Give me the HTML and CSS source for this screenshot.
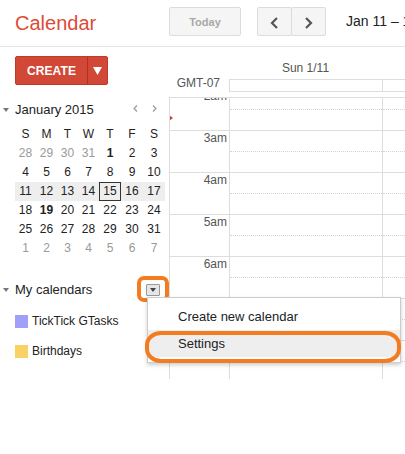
FILE: index.html
```html
<!DOCTYPE html>
<html>
<head>
<meta charset="utf-8">
<title>Calendar</title>
<link rel="stylesheet" href="styles.css">
</head>
<body>
<header class="topbar">
  <div class="logo">Calendar</div>
  <div class="btn today">Today</div>
  <div class="navgroup">
    <div class="btn nav"><svg width="9" height="12" viewBox="0 0 9 12"><polyline points="7,1 2,6 7,11" fill="none" stroke="#555" stroke-width="2.2"/></svg></div>
    <div class="btn nav next"><svg width="9" height="12" viewBox="0 0 9 12"><polyline points="2,1 7,6 2,11" fill="none" stroke="#555" stroke-width="2.2"/></svg></div>
  </div>
  <div class="range">Jan 11 – 17, 2015</div>
</header>

<div class="main">
  <aside class="sidebar">
    <div class="create">
      <span class="create-main">CREATE</span>
      <span class="create-drop"><svg width="9" height="8" viewBox="0 0 9 8"><polygon points="0,0 9,0 4.5,8" fill="#fff"/></svg></span>
    </div>

    <div class="minical">
      <div class="mc-head">
        <span class="caret"></span>
        <span class="mc-title">January 2015</span>
        <span class="mc-arrows">
          <svg width="5" height="7" viewBox="0 0 5 7"><polyline points="4,0.5 1,3.5 4,6.5" fill="none" stroke="#999" stroke-width="1.2"/></svg>
          <svg width="5" height="7" viewBox="0 0 5 7"><polyline points="1,0.5 4,3.5 1,6.5" fill="none" stroke="#999" stroke-width="1.2"/></svg>
        </span>
      </div>
      <div class="mc-grid">
        <span class="wd">S</span><span class="wd">M</span><span class="wd">T</span><span class="wd">W</span><span class="wd">T</span><span class="wd">F</span><span class="wd">S</span>
        <span class="d off">28</span><span class="d off">29</span><span class="d off">30</span><span class="d off">31</span><span class="d bold">1</span><span class="d">2</span><span class="d">3</span>
        <span class="d">4</span><span class="d">5</span><span class="d">6</span><span class="d">7</span><span class="d">8</span><span class="d">9</span><span class="d">10</span>
        <span class="d sel">11</span><span class="d sel">12</span><span class="d sel">13</span><span class="d sel">14</span><span class="d sel today-box">15</span><span class="d sel">16</span><span class="d sel">17</span>
        <span class="d">18</span><span class="d bold">19</span><span class="d">20</span><span class="d">21</span><span class="d">22</span><span class="d">23</span><span class="d">24</span>
        <span class="d">25</span><span class="d">26</span><span class="d">27</span><span class="d">28</span><span class="d">29</span><span class="d">30</span><span class="d">31</span>
        <span class="d off">1</span><span class="d off">2</span><span class="d off">3</span><span class="d off">4</span><span class="d off">5</span><span class="d off">6</span><span class="d off">7</span>
      </div>
    </div>

    <div class="mycal-head">
      <span class="caret"></span>
      <span class="mycal-title">My calendars</span>
      <span class="mycal-btn"><span class="mini-tri"></span></span>
    </div>
    <ul class="callist">
      <li class="calitem"><span class="swatch sw-tick"></span>TickTick GTasks</li>
      <li class="calitem"><span class="swatch sw-bday"></span>Birthdays</li>
    </ul>
  </aside>

  <section class="content">
    <div class="dayhead">
      <div class="tzspace"></div>
      <div class="dayname">Sun 1/11</div>
    </div>
    <div class="allday">
      <div class="tz">GMT-07</div>
      <div class="allday-box">
        <div class="ad-cell"></div>
        <div class="ad-rest"></div>
      </div>
    </div>
    <div class="grid">
      <div class="grid-inner">
        <div class="hour"><div class="hlabel">2am</div><div class="cell"><div class="half"></div></div><div class="cell rest"><div class="half"></div></div></div>
        <div class="hour"><div class="hlabel">3am</div><div class="cell"><div class="half"></div></div><div class="cell rest"><div class="half"></div></div></div>
        <div class="hour"><div class="hlabel">4am</div><div class="cell"><div class="half"></div></div><div class="cell rest"><div class="half"></div></div></div>
        <div class="hour"><div class="hlabel">5am</div><div class="cell"><div class="half"></div></div><div class="cell rest"><div class="half"></div></div></div>
        <div class="hour"><div class="hlabel">6am</div><div class="cell"><div class="half"></div></div><div class="cell rest"><div class="half"></div></div></div>
        <div class="hour"><div class="hlabel">7am</div><div class="cell"><div class="half"></div></div><div class="cell rest"><div class="half"></div></div></div>
        <div class="hour"><div class="hlabel">8am</div><div class="cell"><div class="half"></div></div><div class="cell rest"><div class="half"></div></div></div>
      </div>
      <span class="now-marker"></span>
    </div>
  </section>

  <div class="menu">
    <div class="menu-item">Create new calendar</div>
    <div class="menu-item active">Settings</div>
    <span class="ring-settings"></span>
  </div>
</div>
</body>
</html>
```

FILE: styles.css
```css
*, *::before, *::after { box-sizing: border-box; }

html, body {
  margin: 0;
  padding: 0;
  background: #fff;
}

body {
  width: 405px;
  height: 454px;
  overflow: hidden;
  font-family: "Liberation Sans", Arial, sans-serif;
  color: #222;
}

/* ---------- top bar ---------- */
.topbar {
  display: flex;
  align-items: flex-start;
  height: 47px;
  border-bottom: 1px solid #e5e5e5;
  white-space: nowrap;
}

.logo {
  width: 169px;
  flex: none;
  padding: 11px 0 0 15px;
  font-size: 20px;
  line-height: 24px;
  color: #dd4b39;
}

.btn {
  display: flex;
  align-items: center;
  justify-content: center;
  height: 29px;
  margin-top: 7px;
  border: 1px solid #dcdcdc;
  border-radius: 2px;
  background: #f5f5f5;
  flex: none;
}

.today {
  width: 72px;
  font-size: 11px;
  font-weight: bold;
  color: #a8a8a8;
}

.navgroup {
  display: flex;
  margin-left: 16px;
}

.nav {
  width: 35px;
  padding-top: 2px;
}

.nav.next {
  margin-left: -1px;
}

.range {
  margin-left: 20px;
  padding-top: 13px;
  font-size: 14px;
  line-height: 17px;
  color: #222;
}

/* ---------- main ---------- */
.main {
  position: relative;
  display: flex;
}

.sidebar {
  width: 169px;
  flex: none;
  padding: 9px 4px 0 15px;
}

.create {
  display: flex;
  width: 93px;
  height: 29px;
  border: 1px solid #c53727;
  border-radius: 2px;
  background: #d14836;
  color: #fff;
}

.create-main {
  width: 71px;
  display: flex;
  align-items: center;
  justify-content: center;
  font-size: 12px;
  font-weight: bold;
  letter-spacing: 0.1px;
}

.create-drop {
  flex: 1;
  display: flex;
  align-items: center;
  justify-content: center;
  border-left: 1px solid #b3301f;
}

.caret {
  width: 0;
  height: 0;
  border-left: 3px solid transparent;
  border-right: 3px solid transparent;
  border-top: 4px solid #777;
  flex: none;
}

.minical {
  margin-top: 17px;
}

.mc-head {
  display: flex;
  align-items: center;
  margin-left: -12px;
  height: 15px;
}

.mc-title {
  margin-left: 6px;
  font-size: 13px;
  line-height: 15px;
  color: #222;
}

.mc-arrows {
  margin-left: auto;
  margin-right: 8px;
  display: flex;
  gap: 14px;
  padding-bottom: 3px;
}

.mc-grid {
  margin-top: 8px;
  display: grid;
  grid-template-columns: 21px 21px 21px 21px 22px 22px 22px;
  grid-auto-rows: 19px;
}

.wd, .d {
  font-size: 12px;
  line-height: 19px;
  text-align: center;
  color: #222;
}

.d.off { color: #999; }
.d.bold { font-weight: bold; }
.d.sel { background: #eee; }
.d.today-box {
  border: 1px solid #333;
  line-height: 17px;
}

.mycal-head {
  display: flex;
  align-items: center;
  margin-top: 24px;
  margin-left: -12px;
  height: 15px;
}

.mycal-title {
  margin-left: 6px;
  font-size: 13px;
  line-height: 15px;
  color: #222;
}

.mycal-btn {
  position: relative;
  margin-left: auto;
  margin-right: 5px;
  width: 14px;
  height: 12px;
  border: 1px solid #999;
  border-radius: 1px;
  background: #e6e6e6;
  display: flex;
  align-items: center;
  justify-content: center;
}

.mini-tri {
  width: 0;
  height: 0;
  border-left: 3px solid transparent;
  border-right: 3px solid transparent;
  border-top: 4px solid #444;
}

/* orange annotation ring around the dropdown button */
.mycal-btn::after {
  content: "";
  position: absolute;
  left: -10px;
  top: -9px;
  width: 32px;
  height: 26px;
  border: 4px solid #f47c20;
  border-radius: 7px;
}

.callist {
  list-style: none;
  margin: 9px 0 0 0;
  padding: 0;
}

.calitem {
  display: flex;
  align-items: center;
  height: 30px;
  font-size: 12px;
  color: #222;
}

.swatch {
  width: 13px;
  height: 13px;
  margin-right: 4px;
  flex: none;
}

.sw-tick { background: #a0a0f8; }
.sw-bday { background: #fad165; }

/* ---------- day view ---------- */
.content {
  flex: 1;
  min-width: 0;
}

.dayhead {
  display: flex;
  padding-top: 14px;
}

.tzspace {
  width: 60px;
  flex: none;
}

.dayname {
  width: 153px;
  flex: none;
  text-align: center;
  font-size: 12px;
  line-height: 14px;
  color: #555;
}

.allday {
  display: flex;
  align-items: flex-start;
  margin-top: 4px;
  height: 13px;
}

.tz {
  width: 60px;
  flex: none;
  margin-top: -3px;
  padding-right: 9px;
  text-align: right;
  font-size: 12px;
  line-height: 14px;
  color: #555;
}

.allday-box {
  flex: 1;
  display: flex;
  height: 13px;
  border: 1px solid #ddd;
  border-right: none;
}

.ad-cell {
  width: 153px;
  flex: none;
  border-right: 1px solid #ddd;
}

.ad-rest { flex: 1; }

.grid {
  position: relative;
  margin-top: 5px;
  height: 282px;
  border-top: 1px solid #ddd;
  border-left: 1px solid #ddd;
  overflow: hidden;
}

.grid-inner {
  margin-top: -10px;
}

.hour {
  display: flex;
  height: 42px;
  border-top: 1px solid #ddd;
}

.hlabel {
  width: 60px;
  flex: none;
  border-right: 1px solid #ddd;
  padding-right: 2px;
  text-align: right;
  font-size: 12px;
  line-height: 14px;
  color: #555;
}

.cell {
  width: 153px;
  flex: none;
  border-right: 1px solid #ddd;
}

.cell.rest {
  flex: 1;
  border-right: none;
}

.half {
  height: 21px;
  border-bottom: 1px dotted #d4d4d4;
}

.now-marker {
  position: absolute;
  left: -1px;
  top: 17px;
  width: 0;
  height: 0;
  border-left: 4px solid #d23f31;
  border-top: 3.5px solid transparent;
  border-bottom: 3.5px solid transparent;
}

/* ---------- dropdown menu ---------- */
.menu {
  position: absolute;
  left: 147px;
  top: 250px;
  width: 254px;
  padding: 5px 0;
  background: #fff;
  border: 1px solid #ccc;
  box-shadow: 0 2px 4px rgba(0, 0, 0, 0.2);
  z-index: 5;
}

.menu-item {
  height: 27px;
  padding-left: 30px;
  font-size: 13px;
  line-height: 27px;
  color: #222;
}

.menu-item.active {
  background: #eee;
}

.ring-settings {
  position: absolute;
  left: -3px;
  top: 33px;
  width: 256px;
  height: 32px;
  border: 4px solid #f47c20;
  border-radius: 16px / 14px;
}
```
